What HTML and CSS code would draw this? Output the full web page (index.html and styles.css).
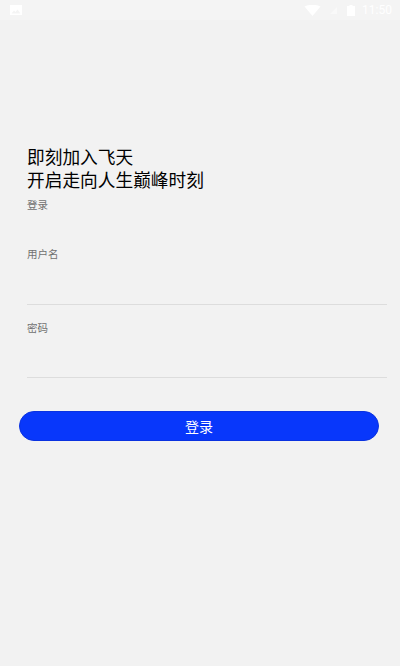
FILE: index.html
```html
<!DOCTYPE html>
<html lang="zh-CN">
<head>
    <meta charset="UTF-8">
    <meta name="viewport" content="width=device-width, initial-scale=1.0">
    <title>飞天</title>
    <link rel="stylesheet" href="styles.css">
</head>
<body>
    <div class="status-bar">
        <svg class="status-image" viewBox="0 0 12 10">
            <path d="M0 0h12v10H0z M1.500 8.500h9L7.500 4.500 5.500 7 4 5.500z" fill="#fff" fill-rule="evenodd"/>
        </svg>
        <div class="status-right">
            <svg class="status-wifi" viewBox="0 0 16 11">
                <path d="M0 1.500Q8-2 16 1.500L8 11z" fill="#fff"/>
            </svg>
            <svg class="status-signal" viewBox="0 0 9 9">
                <path d="M1 8 8 1v7z" fill="#fff" fill-opacity="0.45"/>
            </svg>
            <svg class="status-battery" viewBox="0 0 8 11">
                <path d="M2.500 0h3v1H8v10H0V1h2.500z" fill="#fff"/>
            </svg>
            <span class="status-time">11:50</span>
        </div>
    </div>

    <div class="content">
        <div class="title">即刻加入飞天<br>开启走向人生巅峰时刻</div>
        <div class="subtitle">登录</div>

        <div class="field field-first">
            <div class="field-label">用户名</div>
        </div>
        <div class="field">
            <div class="field-label">密码</div>
        </div>
    </div>

    <button class="login-btn">登录</button>
</body>
</html>
```

FILE: styles.css
```css
* { margin: 0; padding: 0; box-sizing: border-box; }
body {
    font-family: "Noto Sans CJK SC", "Liberation Sans", sans-serif;
    background: #f2f2f2;
    width: 400px;
    height: 666px;
    overflow: hidden;
}
.status-bar {
    height: 20px;
    background: #f4f4f4;
    padding: 0 8px 0 10px;
    display: flex;
    align-items: center;
    justify-content: space-between;
}
.status-right { display: flex; align-items: center; }
.status-image { width: 12px; height: 10px; }
.status-wifi { width: 17px; height: 11px; margin-right: 8px; }
.status-signal { width: 9px; height: 9px; margin-right: 9px; }
.status-battery { width: 8px; height: 11px; margin-right: 7px; }
.status-time { font-family: Roboto, sans-serif; font-size: 12px; color: #fff; width: 30px; }
.content { padding: 127px 13px 0 27px; }
.title {
    font-family: "Liberation Sans", "Noto Sans CJK SC", sans-serif;
    font-size: 17.700px;
    line-height: 23px;
    color: #000;
}
.subtitle { font-size: 10.500px; line-height: 14px; color: #707070; margin-top: 5px; }
.field {
    height: 73px;
    padding-top: 16px;
    border-bottom: 1px solid #ddd;
}
.field-first { height: 93px; padding-top: 35px; }
.field-label { font-size: 10.500px; line-height: 14px; color: #707070; }
.login-btn {
    display: block;
    width: 360px;
    height: 30px;
    margin: 33px 0 0 19px;
    padding-bottom: 1px;
    border: 1px solid #0a32e0;
    border-radius: 15px;
    background: #0837fb;
    color: #fff;
    font-family: inherit;
    font-size: 14px;
}
```
